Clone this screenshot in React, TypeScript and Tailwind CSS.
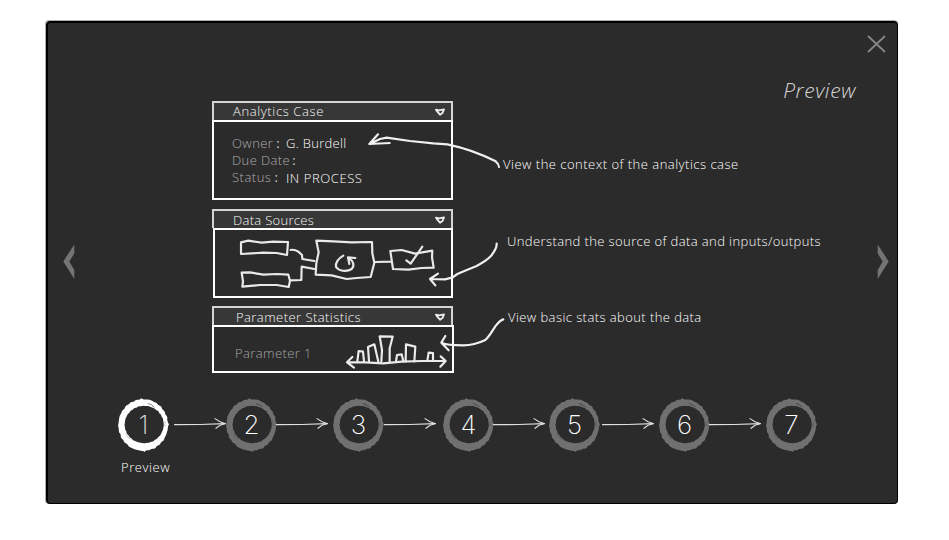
import type { ReactNode } from "react";

// A rough, hand-brushed loop: an ellipse whose radius wavers a little.
function loop(cx: number, cy: number, rx: number, ry: number, waver: number) {
  const points = Array.from({ length: 90 }, (_, i) => {
    const a = (i / 90) * Math.PI * 2;
    const k = waver * (Math.sin(i * 1.7) * 0.4 + Math.sin(i * 4.3 + 1) * 0.4 + Math.sin(i * 0.9) * 0.2);
    return `${(cx + (rx + k) * Math.cos(a)).toFixed(1)} ${(cy + (ry + k) * Math.sin(a)).toFixed(1)}`;
  });
  return `M${points.join("L")}Z`;
}

const ring = loop(99.5, 107, 74.5, 77.5, 1.8) + loop(102.5, 105.5, 58.5, 56, 1);

function Step({ n, active }: { n: number; active?: boolean }) {
  return (
    <div className="grid h-[54px] w-[51px] shrink-0 place-items-center">
      <svg viewBox="24 26 153 162" className={`col-start-1 row-start-1 h-[54px] w-[51px] ${active ? "text-white" : "text-[#707070]"}`}>
        <path d={ring} fill="currentColor" fillRule="evenodd" />
        <path d="M170 94L177 105L171 116ZM89 32L94 26L99 32ZM96 182L103 188L109 182Z" fill="currentColor" />
        <g fill="none" stroke="#2b2b2b" strokeLinecap="round">
          <path d="M115 43L124 46L132 53" strokeWidth="1.8" />
          <path d="M163 97L166 101M164 107L167 109" strokeWidth="1.8" opacity=".7" />
          <path d="M48 136L54 143L61 150" strokeWidth="1.6" opacity=".5" />
        </g>
      </svg>
      <span className={`col-start-1 row-start-1 font-[Inter,sans-serif] text-[26px] leading-[54px] font-extralight ${active ? "text-[#d8d8d8]" : "text-white"}`}>{n}</span>
    </div>
  );
}

function StepArrow({ className }: { className: string }) {
  return (
    <svg viewBox="0 0 52 14" className={`relative -top-px h-[14px] w-[52px] shrink-0 ${className}`} fill="none" stroke="#e0e0e0" strokeLinecap="round">
      <path d="M0.5 7.6L26 7.5L51 6.6" strokeWidth="1.2" />
      <path d="M41 1.6L46 4.8L51.3 6.6L46 8.3L42 11.3" strokeWidth="1.1" />
    </svg>
  );
}

function Panel({ title, titleClass, bodyClass, className, children }: { title: string; titleClass: string; bodyClass: string; className: string; children: ReactNode }) {
  return (
    <section className={className}>
      <header className="flex h-[19px] w-[241px] items-start justify-between border-2 border-b-0 border-[#d6d3d6] bg-[#373737] pr-[6px]">
        <h2 className={`text-[13px] whitespace-nowrap text-[#f8f8f8] ${titleClass}`}>{title}</h2>
        <svg viewBox="0 0 30 24" className="mt-[5px] h-[8px] w-[10px]" fill="none" stroke="#ededed" strokeWidth="5.5" strokeLinecap="round" strokeLinejoin="round">
          <path d="M3 5L12 7L27 4L23 14L15 20L9 13L4 7" />
        </svg>
      </header>
      <div className={`border-2 border-white ${bodyClass}`}>{children}</div>
    </section>
  );
}

function Chevron({ flip }: { flip?: boolean }) {
  return (
    <svg viewBox="0 0 12 36" className={`h-[36px] w-[12px] ${flip ? "-scale-x-100" : ""}`}>
      <path d="M11.3 0.5V9.5L6.3 17.5L11.3 26V35L0.3 17.5Z" fill="#747474" />
    </svg>
  );
}

export default function App() {
  return (
    <div className="h-[540px] w-[949px] overflow-hidden bg-white pt-[20px] pl-[45px] font-['Open_Sans','Noto_Sans',sans-serif] text-[13px] font-light text-[#ececec]">
      <div className="h-[484px] w-[853px] rounded-[4px] border-t border-l border-[#a9b3ad]">
        <main className="relative h-[483px] w-[852px] rounded-[4px] border-t-2 border-r border-b border-l-2 border-black bg-[#2b2b2b]">
          <div className="flex h-[375px]">
            <button aria-label="Previous" className="mt-[221px] ml-[15px] h-[36px] w-[12px]">
              <Chevron />
            </button>

            <div className="ml-[137px] w-[242px] pt-[78px]">
              <Panel title="Analytics Case" titleClass="pl-[19px] leading-[17px] tracking-[0.62px]" bodyClass="h-[80px] w-[241px] pt-[13px] pl-[18px]" className="h-[99px]">
                <dl className="leading-[17px] text-white">
                  <div className="flex h-[17px]">
                    <dt className="w-[54px] tracking-[0.4px] text-[#b0aaac]">Owner<b className="ml-[3px] text-[#d8d8d8]">:</b></dt>
                    <dd className="tracking-[0.3px]">G. Burdell</dd>
                  </div>
                  <div className="flex h-[17px]">
                    <dt className="tracking-[0.4px] text-[#b0aaac]">Due Date<b className="ml-[2px] text-[#d8d8d8]">:</b></dt>
                  </div>
                  <div className="flex h-[17px]">
                    <dt className="w-[54px] tracking-[0.5px] text-[#b0aaac]">Status<b className="ml-[3px] text-[#d8d8d8]">:</b></dt>
                    <dd className="pt-px tracking-[0.58px]">IN PROCESS</dd>
                  </div>
                </dl>
              </Panel>

              <Panel title="Data Sources" titleClass="pl-[19px] leading-[19px] tracking-[0.3px]" bodyClass="ml-px h-[70px] w-[240px]" className="mt-[9px] h-[89px]">
                <svg viewBox="30 78 708 198" className="block h-[66px] w-[236px]" fill="none" stroke="#e9e9e9" strokeWidth="6.5" strokeLinecap="round" strokeLinejoin="round">
                  <path d="M108 115L130 110L170 116L205 113L249 114L246 153L215 147L175 146L108 150Z" />
                  <path d="M110 206L135 205L175 212L215 210L250 212L255 230L251 249L215 243L165 243L112 248L114 232Z" />
                  <path d="M257 138Q268 135 280 143L291 153L292 165L328 171M256 229L289 228L290 188L328 195" />
                  <path d="M334 110L385 112L440 115L501 114L502 148L508 176L497 219L455 222L425 225L380 214L332 212L334 178L341 145Z" />
                  <path d="M415 155C400 163 390 178 393 189C401 201 425 205 440 195C449 186 446 171 433 164M451 162L429 160L433 180" />
                  <path d="M512 174L557 173M556 141L590 138L630 149L682 140L681 160L686 191L650 192L610 197L564 195L560 168Z" />
                  <path d="M604 169L617 179L652 128" />
                </svg>
              </Panel>

              <Panel title="Parameter Statistics" titleClass="pl-[22px] leading-[19px] tracking-[0.44px]" bodyClass="flex h-[48px] w-[242px] items-start justify-between" className="mt-[8px] h-[67px]">
                <span className="pt-[17px] pl-[21px] leading-[18px] tracking-[0.4px] whitespace-nowrap text-[#a4a4a4]">Parameter 1</span>
                <svg viewBox="414 81 327 132" className="h-[44px] w-[109px]" fill="none" stroke="#ebebeb" strokeWidth="6.5" strokeLinecap="round" strokeLinejoin="round">
                  <path d="M426 187L480 187L535 190L590 185L650 183L720 183M442 171L426 187L447 203M707 169L722 183L706 200" />
                  <path d="M457 184L461 153L474 155L477 184M492 184L489 141L508 133L520 185M529 184L531 150L524 109L563 110L554 145L554 186M573 184L576 165L590 163L595 184M602 184L603 133L631 140L628 184M667 182L671 158L684 159L684 182" />
                </svg>
              </Panel>
            </div>

            <div className="flex-1 pt-[132px] leading-[18px] whitespace-nowrap text-white">
              <p className="ml-[49px] h-[77px] w-[270px] tracking-[0.49px]">View the context of the analytics case</p>
              <p className="ml-[53px] h-[76px] w-[270px] tracking-[0.4px]">Understand the source of data and inputs/outputs</p>
              <p className="ml-[54px] w-[270px] tracking-[0.42px]">View basic stats about the data</p>
            </div>

            <aside className="flex w-[120px] flex-col items-end">
              <button aria-label="Close" className="mt-[12px] mr-[11px] h-[18px] w-[19px]">
                <svg viewBox="0 0 19 18" className="h-[18px] w-[19px]" fill="none" stroke="#858585" strokeWidth="1.8">
                  <path d="M1 1L18 17M18 1L1 17" />
                </svg>
              </button>
              <h1 className="mt-[22px] mr-[41px] h-[30px] text-[21px] leading-[30px] font-light tracking-[0.6px] text-[#d6d6d6] italic">Preview</h1>
              <button aria-label="Next" className="mt-[139px] mr-[8px] h-[36px] w-[12px]">
                <Chevron flip />
              </button>
            </aside>
          </div>

          <nav className="flex h-[54px] items-center pl-[70px]">
            <Step n={1} active />
            <StepArrow className="ml-[5px]" />
            <Step n={2} />
            <StepArrow className="mr-[5px] -ml-px" />
            <Step n={3} />
            <StepArrow className="mr-[7px]" />
            <Step n={4} />
            <StepArrow className="mr-[4px] -ml-px" />
            <Step n={5} />
            <StepArrow className="mr-[5px] ml-[2px]" />
            <Step n={6} />
            <StepArrow className="mr-[5px] -ml-px" />
            <Step n={7} />
          </nav>
          <p className="mt-[6px] ml-[73px] leading-[18px] tracking-[0.55px] text-white">Preview</p>

          {/* Hand-drawn pointers that run from each note onto its panel */}
          <svg viewBox="48 23 849 480" className="pointer-events-none absolute top-0 left-0 h-[480px] w-[849px]" fill="none" stroke="#f0f0f0" strokeWidth="6.5" strokeLinecap="round" strokeLinejoin="round">
            <g transform="translate(360 120) scale(0.33333)">
              <path d="M417 141Q416 131 407 124C370 105 320 85 262 73L220 70L150 63L80 53L60 57L28 72M54 43L28 72L89 69" />
            </g>
            <g transform="translate(420 230) scale(0.33333)">
              <path d="M230 41C231 52 224 64 212 79C200 92 185 100 170 108L135 122L112 132L98 142L75 148L30 147M54 131L30 147L46 166" />
              <path d="M250 268C238 271 232 282 224 292C214 308 206 322 196 330C175 340 150 346 130 346C100 346 80 346 66 339M76 318L64 338L86 361" />
            </g>
          </svg>
        </main>
      </div>
    </div>
  );
}
